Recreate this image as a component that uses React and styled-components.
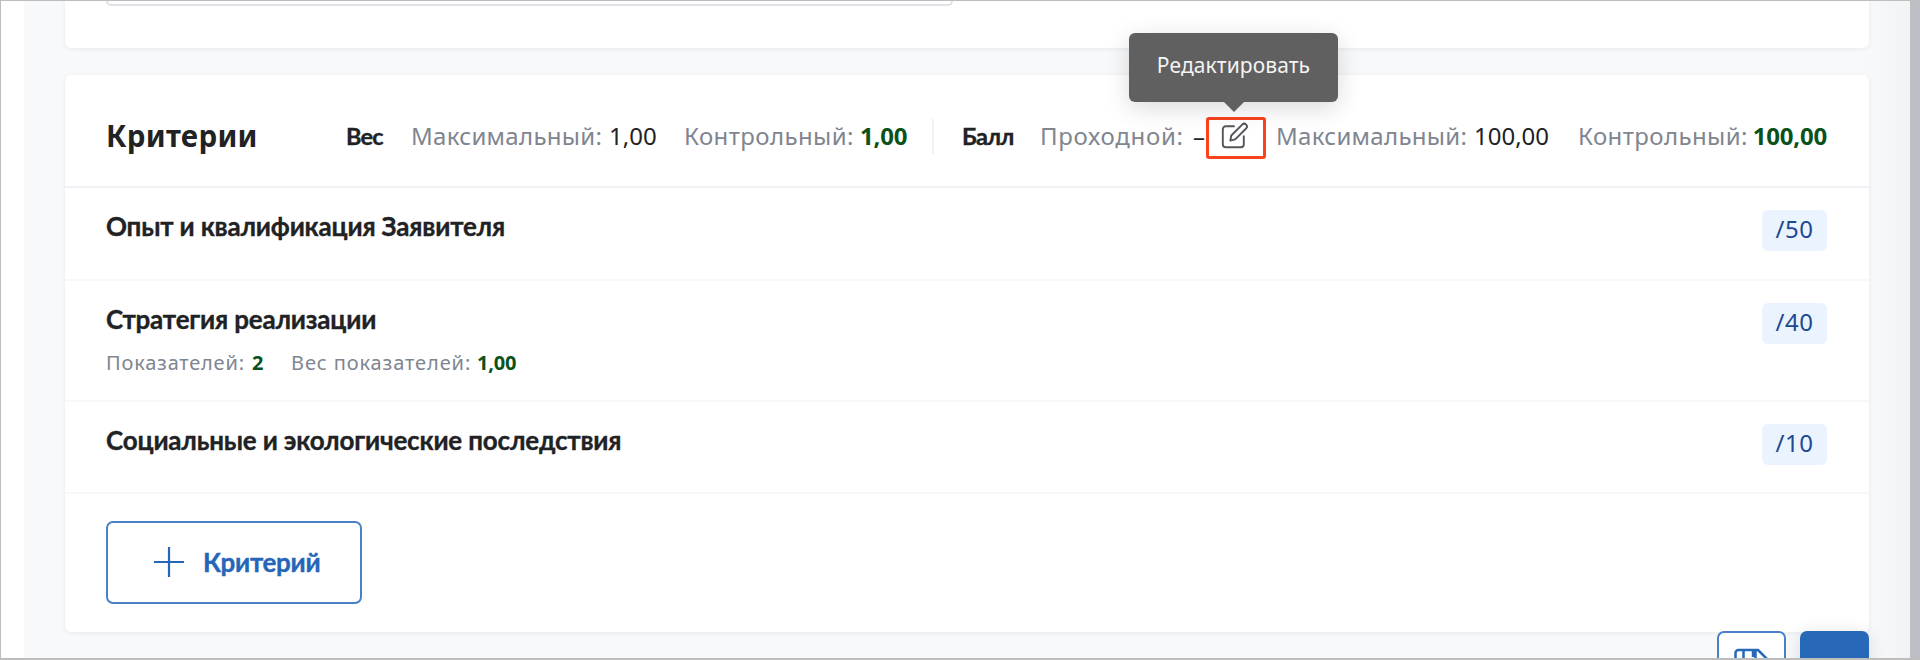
import React from "react";
import styled, { createGlobalStyle, css } from "styled-components";

const GlobalStyle = createGlobalStyle`
  * { box-sizing: border-box; }
  body { margin: 0; overflow: hidden; background: #fff; }
`;

const textFont = css`font-family: "Noto Sans", sans-serif;`;
const boldFont = css`
  font-family: "Lato", sans-serif;
  font-weight: 700;
  -webkit-text-stroke: 0.35px currentColor;
`;
const wideBoldFont = css`
  font-family: "Noto Sans", sans-serif;
  font-weight: 700;
`;

const Frame = styled.div`
  ${textFont}
  display: flex;
  height: 660px;
  width: 1920px;
  overflow: hidden;
  border: 1px solid #bdbdbd;
  border-bottom-width: 2px;
  color: #212224;
  position: relative;
`;
const Gutter = styled.div`width: 23px; background: #fff;`;
const Page = styled.main`
  flex: 1;
  padding: 0 41px;
  background: linear-gradient(90deg, #f7f9fb 1840px, #f2f3f4 100%);
`;
const Scrollbar = styled.div`width: 9px; background: #bebec5;`;

const Card = styled.section`
  background: #fff;
  border-radius: 6px;
  box-shadow: 0 1px 5px rgba(30, 40, 60, 0.07);
`;
const FormCard = styled(Card)`
  height: 47px;
  margin-bottom: 27px;
  border-radius: 0 0 6px 6px;
  padding-left: 41px;
`;
const Field = styled.div`
  width: 847px;
  height: 5px;
  border: 2px solid #dfe3e9;
  border-top: 0;
  border-radius: 0 0 6px 6px;
`;
const CriteriaCard = styled(Card)`height: 557px;`;

const Header = styled.header`
  display: flex;
  align-items: center;
  height: 113px;
  padding: 11px 41px 0 41px;
  border-bottom: 2px solid #f0f1f5;
  white-space: nowrap;
`;
const Title = styled.h1`
  ${wideBoldFont}
  width: 240px;
  margin: 0;
  font-size: 29.5px;
  line-height: 40px;
  letter-spacing: 0.3px;
`;
const Group = styled.div`
  display: flex;
  align-items: center;
  font-size: 24px;
  line-height: 34px;
`;
const GroupName = styled.b`
  ${boldFont}
  width: ${(p) => p.$width}px;
  font-size: 23.5px;
  letter-spacing: -0.8px;
`;
const Metric = styled.div`
  display: flex;
  width: ${(p) => p.$width}px;
`;
const Label = styled.span`
  width: ${(p) => p.$width}px;
  color: #80858f;
  letter-spacing: ${(p) => p.$track || 0.3}px;
`;
const Value = styled.span`
  ${(p) => p.$control && css`${wideBoldFont} color: #0a5219; letter-spacing: -0.2px;`}
`;
const Divider = styled.div`
  width: 2px;
  height: 35px;
  margin-right: 28px;
  background: #f0f1f5;
`;

const EditButton = styled.button`
  position: relative;
  display: flex;
  align-items: center;
  justify-content: center;
  width: 60px;
  height: 42px;
  margin: 4px 10px 0 0;
  padding: 0 2px 4px 0;
  border: 3px solid #fa421d;
  border-radius: 3px;
  background: #fff;
  color: #53565b;
`;
const Tooltip = styled.div`
  ${textFont}
  position: absolute;
  left: -80px;
  bottom: 54px;
  width: 209px;
  height: 69px;
  padding-top: 15px;
  border-radius: 6px;
  background: #606060;
  box-shadow: 0 6px 24px rgba(0, 0, 0, 0.15);
  color: #f4f4f4;
  font-size: 21px;
  line-height: 34px;
  letter-spacing: 0.1px;
  text-align: center;
  &::after {
    content: "";
    position: absolute;
    top: 69px;
    left: 95px;
    border: 10px solid transparent;
    border-top-color: #606060;
    border-bottom: 0;
  }
`;

const Criterion = styled.article`
  display: flex;
  justify-content: space-between;
  align-items: flex-start;
  height: ${(p) => p.$height}px;
  padding: 22px 42px 0 41px;
  border-bottom: 2px solid #f6f8f9;
`;
const CriterionName = styled.h2`
  ${boldFont}
  margin: 0;
  font-size: 26px;
  line-height: 33px;
  letter-spacing: -0.19px;
`;
const Details = styled.div`
  display: flex;
  margin-top: 12px;
  font-size: 20px;
  line-height: 30px;
`;
const Badge = styled.span`
  width: 65px;
  height: 41px;
  border-radius: 6px;
  background: #ebf3ff;
  color: #1c4a91;
  font-size: 24px;
  line-height: 38px;
  text-align: center;
  letter-spacing: 0.5px;
`;

const AddButton = styled.button`
  ${boldFont}
  display: flex;
  align-items: center;
  gap: 18px;
  width: 256px;
  height: 83px;
  margin: 27px 0 0 41px;
  padding: 0 0 2px 45px;
  border: 2px solid #4a80c8;
  border-radius: 7px;
  background: #fff;
  color: #2566b8;
  font-size: 26px;
  letter-spacing: -0.3px;
`;
const FloatingActions = styled.div`
  position: absolute;
  right: 50px;
  top: 630px;
  display: flex;
  gap: 14px;
`;
const ActionButton = styled.button`
  display: flex;
  align-items: flex-start;
  width: 69px;
  height: 69px;
  padding: 15px 0 0 15px;
  border: 2px solid ${(p) => (p.$primary ? "#2868b8" : "#4a80c8")};
  border-radius: 7px;
  background: ${(p) => (p.$primary ? "#2868b8" : "#fff")};
  box-shadow: ${(p) => (p.$primary ? "0 2px 18px rgba(0, 0, 0, 0.12)" : "none")};
`;

const EditIcon = () => (
  <svg width="28" height="28" viewBox="0 0 28 28" fill="none" stroke="currentColor" strokeWidth="1.9" strokeLinecap="round" strokeLinejoin="round">
    <path d="M13 4.300H4.800a3 3 0 0 0-3 3v15a3 3 0 0 0 3 3h15a3 3 0 0 0 3-3v-8.200" />
    <path d="M9.300 18.600l1-5.100L21.200 2.600a2.750 2.750 0 0 1 3.900 3.900L14.200 17.400z" />
  </svg>
);
const PlusIcon = () => (
  <svg width="32" height="32" viewBox="0 0 32 32" stroke="currentColor" strokeWidth="2.2">
    <path d="M1 16h30M16 1v30" />
  </svg>
);
const SaveIcon = () => (
  <svg width="36" height="36" viewBox="0 0 36 36" fill="none" stroke="#2868b8" strokeWidth="2.5" strokeLinejoin="round">
    <path d="M4.500 2h19.500l9.500 9.500v19a3 3 0 0 1-3 3h-26a3 3 0 0 1-3-3v-25.500a3 3 0 0 1 3-3z" />
    <path d="M9.500 2v11h12v-11M19 2v7" />
  </svg>
);

const criteria = [
  { name: "Опыт и квалификация Заявителя", score: "/50", height: 93 },
  { name: "Стратегия реализации", score: "/40", height: 121, details: true },
  { name: "Социальные и экологические последствия", score: "/10", height: 92 },
];

export default function App() {
  return (
    <Frame>
      <GlobalStyle />
      <Gutter />
      <Page>
        <FormCard><Field /></FormCard>
        <CriteriaCard>
          <Header>
            <Title>Критерии</Title>
            <Group>
              <GroupName $width={65}>Вес</GroupName>
              <Metric $width={273}><Label $width={198}>Максимальный:</Label><Value>1,00</Value></Metric>
              <Metric $width={248}><Label $width={176} $track={0.4}>Контрольный:</Label><Value $control>1,00</Value></Metric>
              <Divider />
            </Group>
            <Group>
              <GroupName $width={78}>Балл</GroupName>
              <Metric $width={166}><Label $width={153} $track={0.7}>Проходной:</Label><Value>–</Value></Metric>
              <EditButton aria-label="Редактировать">
                <EditIcon />
                <Tooltip role="tooltip">Редактировать</Tooltip>
              </EditButton>
              <Metric $width={302}><Label $width={198}>Максимальный:</Label><Value>100,00</Value></Metric>
              <Metric $width={249}><Label $width={176} $track={0.4}>Контрольный:</Label><Value $control>100,00</Value></Metric>
            </Group>
          </Header>
          {criteria.map((c) => (
            <Criterion key={c.name} $height={c.height}>
              <div>
                <CriterionName>{c.name}</CriterionName>
                {c.details && (
                  <Details>
                    <Metric $width={185}><Label $width={146} $track={0.8}>Показателей:</Label><Value $control>2</Value></Metric>
                    <Metric $width={230}><Label $width={186} $track={0.9}>Вес показателей:</Label><Value $control>1,00</Value></Metric>
                  </Details>
                )}
              </div>
              <Badge>{c.score}</Badge>
            </Criterion>
          ))}
          <AddButton><PlusIcon />Критерий</AddButton>
        </CriteriaCard>
      </Page>
      <Scrollbar />
      <FloatingActions>
        <ActionButton aria-label="Сохранить"><SaveIcon /></ActionButton>
        <ActionButton $primary aria-label="Далее" />
      </FloatingActions>
    </Frame>
  );
}
